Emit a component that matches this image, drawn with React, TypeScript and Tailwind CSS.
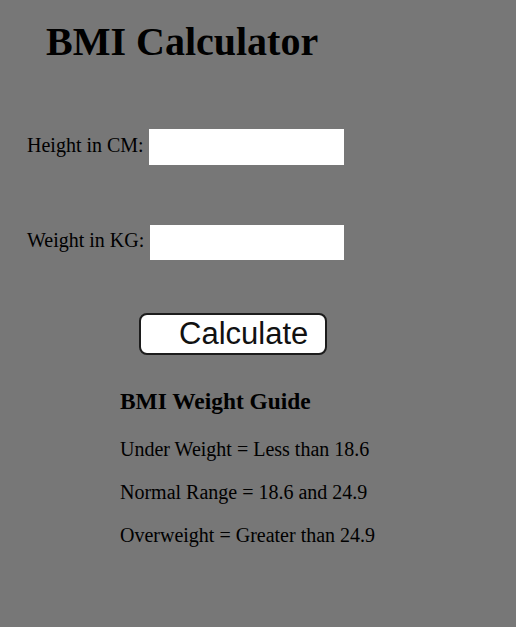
import React from "react";

export default function App() {
  return (
    <div className="min-h-[627px] w-full bg-[#777777] pt-[19px] font-['Liberation_Serif',serif] text-[20px] text-black">
      <h1 className="ml-[46px] text-[40px] font-bold leading-[46px]">BMI Calculator</h1>

      <div className="mt-[64px] ml-[27px] flex items-start gap-[5px]">
        <label className="mt-[5px] leading-[23px]">Height in CM:</label>
        <input className="h-[36px] w-[195px] bg-white outline-none" type="text" />
      </div>

      <div className="mt-[60px] ml-[27px] flex items-start gap-[5px]">
        <label className="mt-[4px] leading-[23px]">Weight in KG:</label>
        <input className="ml-[1px] h-[35px] w-[194px] bg-white outline-none" type="text" />
      </div>

      <div className="mt-[53px] ml-[139px]">
        <button className="flex h-[42px] w-[188px] items-center rounded-[8px] border-2 border-[#1c1c1c] bg-white pl-[38px] font-['Liberation_Sans',sans-serif] text-[31px] leading-[36px] text-[#111]">
          Calculate
        </button>
      </div>

      <div className="ml-[120px] mt-[33px]">
        <h3 className="text-[23.4px] font-bold leading-[27px]">BMI Weight Guide</h3>
        <p className="mt-[23px] leading-[23px]">Under Weight = Less than 18.6</p>
        <p className="mt-[20px] leading-[23px]">Normal Range = 18.6 and 24.9</p>
        <p className="mt-[20px] leading-[23px]">Overweight = Greater than 24.9</p>
      </div>
    </div>
  );
}
